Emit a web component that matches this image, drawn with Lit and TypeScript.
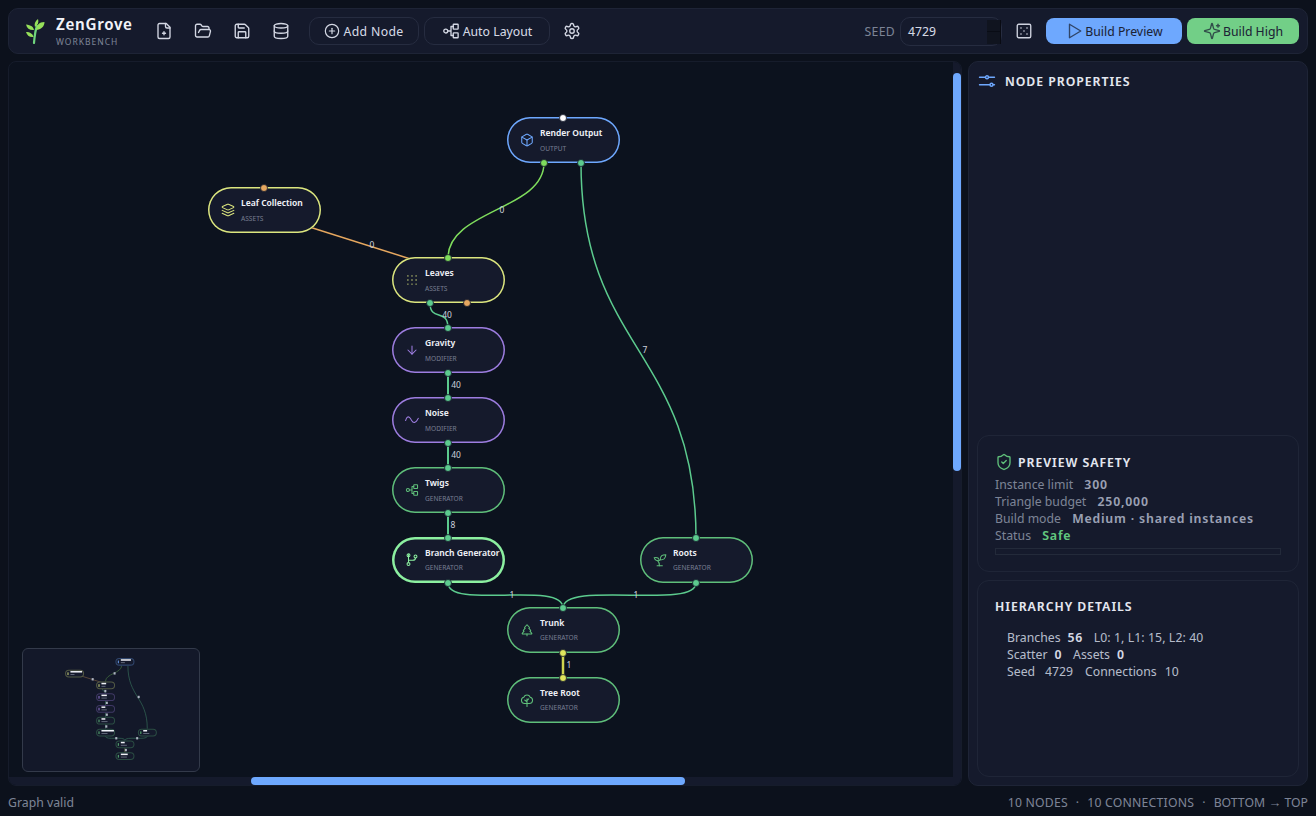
import { LitElement, html, css, svg } from "lit";
import { customElement } from "lit/decorators.js";

type Port = [number, number, string];
interface GNode { x: number; y: number; t: string; s: string; kind: string; icon: any; ports: Port[]; }

const TEAL = "#5ccb8e", LIME = "#7edb5c", ORANGE = "#e6a75f", YEL = "#dfe65c", WHITE = "#ffffff";

const ic = {
  box: svg`<path d="M21 8a2 2 0 0 0-1-1.730l-7-4a2 2 0 0 0-2 0l-7 4A2 2 0 0 0 3 8v8a2 2 0 0 0 1 1.730l7 4a2 2 0 0 0 2 0l7-4A2 2 0 0 0 21 16Z"/><path d="m3.300 7 8.700 5 8.700-5"/><path d="M12 22V12"/>`,
  layers: svg`<path d="m12.830 2.180a2 2 0 0 0-1.660 0L2.600 6.080a1 1 0 0 0 0 1.830l8.580 3.910a2 2 0 0 0 1.660 0l8.580-3.900a1 1 0 0 0 0-1.830Z"/><path d="m22 17.650-9.170 4.160a2 2 0 0 1-1.660 0L2 17.650"/><path d="m22 12.650-9.170 4.160a2 2 0 0 1-1.660 0L2 12.650"/>`,
  grip: svg`<g stroke-width="2.400" stroke-linecap="round"><path d="M5 5h.01M12 5h.01M19 5h.01M5 12h.01M12 12h.01M19 12h.01M5 19h.01M12 19h.01M19 19h.01"/></g>`,
  down: svg`<path d="M12 5v14"/><path d="m19 12-7 7-7-7"/>`,
  wave: svg`<path d="M1 13c2-7 5-8 8-4s4 9 8 7 4-5 6-7"/>`,
  net: svg`<circle cx="5" cy="12" r="2.600"/><rect x="15" y="3" width="6.500" height="6.500" rx=".8"/><rect x="15" y="14.500" width="6.500" height="6.500" rx=".8"/><path d="M7.600 12H12M12 6v12M12 6h3M12 18h3"/>`,
  branch: svg`<path d="M6 3v12"/><circle cx="6" cy="4" r="2.500"/><circle cx="18" cy="6" r="2.500"/><circle cx="6" cy="19" r="2.500"/><path d="M18 8.500c0 3-2 4-5 4H6"/>`,
  sprout: svg`<path d="M7 22h9"/><path d="M11 22c0-4-1-7-3-9"/><path d="M8.500 8.500c1.300 1 2 2.600 2.500 4.500-2.300.4-4 .4-5.500-.4C4 12 2.800 10.400 2 8c3-.5 5.200-.3 6.500.5z"/><path d="M15 4.500A8 8 0 0 0 12.500 12c2.500 0 4.800-.5 6.500-1.800 1.700-1.500 2.700-3.700 3-7.200-3 .1-5.500.5-7 1.500z"/>`,
  pine: svg`<path d="m17 14 3 3.300a1 1 0 0 1-.7 1.700H4.700a1 1 0 0 1-.7-1.700L7 14h-.3a1 1 0 0 1-.7-1.700L9 9h-.2A1 1 0 0 1 8 7.300L12 3l4 4.300a1 1 0 0 1-.8 1.700H15l3 3.300a1 1 0 0 1-.7 1.700H17Z"/><path d="M12 22v-3"/>`,
  tree: svg`<path d="M8 18a5.500 5.500 0 0 1-1.500-10.800 6 6 0 0 1 11 0A5.500 5.500 0 0 1 16 18Z"/><path d="M12 23V10M12 15l-4-3M12 13l3-3"/>`,
};

const NODES: GNode[] = [
  { x: 507, y: 118, t: "Render Output", s: "OUTPUT", kind: "output", icon: ic.box, ports: [[563, 118, WHITE], [544, 163, LIME], [581, 163, TEAL]] },
  { x: 208, y: 188, t: "Leaf Collection", s: "ASSETS", kind: "assets", icon: ic.layers, ports: [[264, 188, ORANGE]] },
  { x: 392, y: 258, t: "Leaves", s: "ASSETS", kind: "assets", icon: ic.grip, ports: [[448, 258, LIME], [430, 303, TEAL], [467, 303, ORANGE]] },
  { x: 392, y: 328, t: "Gravity", s: "MODIFIER", kind: "modifier", icon: ic.down, ports: [[448, 328, TEAL], [448, 373, TEAL]] },
  { x: 392, y: 398, t: "Noise", s: "MODIFIER", kind: "modifier", icon: ic.wave, ports: [[448, 398, TEAL], [448, 443, TEAL]] },
  { x: 392, y: 468, t: "Twigs", s: "GENERATOR", kind: "generator", icon: ic.net, ports: [[448, 468, TEAL], [448, 513, TEAL]] },
  { x: 392, y: 538, t: "Branch Generator", s: "GENERATOR", kind: "generator selected low", icon: ic.branch, ports: [[448, 538, TEAL], [448, 583, TEAL]] },
  { x: 640, y: 538, t: "Roots", s: "GENERATOR", kind: "generator low", icon: ic.sprout, ports: [[696, 538, TEAL], [696, 583, TEAL]] },
  { x: 507, y: 608, t: "Trunk", s: "GENERATOR", kind: "generator low", icon: ic.pine, ports: [[563, 608, TEAL], [563, 653, YEL]] },
  { x: 507, y: 678, t: "Tree Root", s: "GENERATOR", kind: "generator low", icon: ic.tree, ports: [[563, 678, YEL]] },
];

const EDGES = [
  { d: "M300 224 L420 262", c: ORANGE, w: 1.5, l: "0", lx: 372, ly: 245 },
  { d: "M544 163 C544 210 448 210 448 258", c: LIME, w: 1.5, l: "0", lx: 502, ly: 210 },
  { d: "M581 163 C581 350 696 350 696 538", c: TEAL, w: 1.5, l: "7", lx: 645, ly: 350 },
  { d: "M430 303 C430 322 448 308 448 328", c: TEAL, w: 1.5, l: "40", lx: 447, ly: 315 },
  { d: "M448 373 L448 398", c: TEAL, w: 2, l: "40", lx: 456, ly: 385 },
  { d: "M448 443 L448 468", c: TEAL, w: 2, l: "40", lx: 456, ly: 455 },
  { d: "M448 513 L448 538", c: TEAL, w: 2, l: "8", lx: 453, ly: 525 },
  { d: "M448 583 C448 610 563 580 563 608", c: TEAL, w: 1.5, l: "1", lx: 512, ly: 595 },
  { d: "M696 583 C696 610 563 580 563 608", c: TEAL, w: 1.5, l: "1", lx: 636, ly: 595 },
  { d: "M563 653 L563 678", c: "#cfd64f", w: 2.5, l: "1", lx: 569, ly: 665 },
];

const i = (body: any, size = 18, cls = "") => html`<svg class="ico ${cls}" width=${size} height=${size} viewBox="0 0 24 24" fill="none" stroke="currentColor" stroke-width="1.8" stroke-linecap="round" stroke-linejoin="round">${body}</svg>`;

@customElement("app-root")
export class AppRoot extends LitElement {
  static styles = css`
    :host { display: flex; flex-direction: column; height: 816px; box-sizing: border-box; padding: 8px 8px 0; background: #0c111c; font-family: "Noto Sans Display", "Noto Sans", sans-serif; color: #e6e9f2; overflow: hidden; }
    * { box-sizing: border-box; }
    .ico { display: block; flex: none; }
    .toolbar { height: 46px; flex: none; display: flex; align-items: center; background: #151a2c; border: 1px solid #1e2436; border-radius: 10px; padding: 0 8px 0 14px; }
    .brand { display: flex; align-items: center; gap: 9px; width: 121px; }
    .brand-t { display: flex; flex-direction: column; }
    .name { font-size: 16px; font-weight: 600; letter-spacing: .7px; line-height: 20px; color: #f1f3f9; }
    .wb { font-size: 9px; letter-spacing: 1px; line-height: 12px; margin-top: 2px; color: #7c8395; }
    .tbtn { width: 39px; display: flex; justify-content: center; color: #d4d8e4; }
    .tools { display: flex; margin-right: 9px; }
    .btn { height: 28px; display: flex; align-items: center; justify-content: center; gap: 3px; border: 1px solid #262c40; border-radius: 10px; font-size: 13px; color: #d4d8e4; }
    .add { width: 110px; margin-right: 5px; letter-spacing: .35px; }
    .auto { width: 126px; }
    .gear { margin-left: 13px; color: #d4d8e4; }
    .spacer { flex: 1; }
    .seed-l { font-size: 13px; letter-spacing: .3px; color: #7c8395; margin-right: 5px; }
    .seed { position: relative; width: 102px; height: 29px; border: 1px solid #262c40; border-radius: 10px; font-size: 13px; color: #d4d8e4; padding: 0 7px; display: flex; align-items: center; }
    .spin { position: absolute; right: 0; top: 2px; bottom: 1px; width: 14px; display: grid; grid-template-rows: 1fr 1fr; gap: 1px; background: #090c15; border-right: 1px solid #090b13; }
    .spin span { background: #10141f; }
    .dice { margin: 0 13px 0 13px; color: #cfd3df; }
    .build { height: 26px; display: flex; align-items: center; justify-content: center; gap: 2px; border-radius: 8px; font-size: 13px; color: #1c2436; }
    .build .ico { opacity: .75; }
    .prev { width: 136px; background: #6ea8fe; margin-right: 5px; }
    .high { width: 112px; background: #72cf87; }
    .main { flex: 1; min-height: 0; display: flex; gap: 6px; margin-top: 7px; }
    .canvas { position: relative; width: 954px; border: 1px solid #161c2b; border-radius: 8px; overflow: hidden; background: #0c121e; }
    .graph { position: absolute; left: -9px; top: -62px; width: 1316px; height: 816px; }
    .graph svg.edges, .graph svg.ports { position: absolute; inset: 0; }
    .node { position: absolute; width: 113px; height: 46px; border-radius: 23px; background: #151a2c; box-shadow: inset 0 0 0 1.5px currentColor; }
    .node.generator { color: #5fbf7a; }
    .node.selected { color: #8cf0a0; box-shadow: inset 0 0 0 2.5px currentColor; }
    .node.assets { color: #dce67e; }
    .node.modifier { color: #9d7de0; }
    .node.output { color: #6ea8fe; }
    .nico { position: absolute; left: 13px; top: 16px; }
    .nt { position: absolute; left: 33px; top: 8px; font-size: 9px; font-weight: 600; line-height: 16px; color: #eef0f6; white-space: nowrap; }
    .ns { position: absolute; left: 33px; top: 25px; font-size: 7px; line-height: 14px; color: #757c90; white-space: nowrap; }
    .low .ns { top: 24px; }
    .elabel { position: absolute; transform: translate(-50%, -50%); font-size: 9px; line-height: 10px; color: #c9cedb; }
    .vbar { position: absolute; right: 0; top: 0; bottom: 8px; width: 8px; background: #151a2c; }
    .vthumb { position: absolute; left: 0; top: 11px; width: 8px; height: 398px; border-radius: 4px; background: #6ea8fe; }
    .hbar { position: absolute; left: 0; right: 0; bottom: 0; height: 8px; background: #151a2c; }
    .hthumb { position: absolute; left: 242px; top: 0; width: 434px; height: 8px; border-radius: 4px; background: #6ea8fe; }
    .mini { position: absolute; left: 13px; top: 586px; width: 178px; height: 124px; background: #131829; border: 1px solid #333a4a; border-radius: 6px; overflow: hidden; }
    .mini-g { position: absolute; left: 6.6px; top: -11px; width: 1316px; height: 816px; transform: scale(.1685); transform-origin: 0 0; }
    .mini-g svg.edges { position: absolute; inset: 0; opacity: .38; }
    .mini-g svg.edges path { stroke-width: 5px; }
    .mnode { position: absolute; width: 113px; height: 46px; border: 6px solid color-mix(in srgb, currentColor 32%, #131829); border-radius: 23px; background: #151a2c; }
    .mnode.generator { color: #5fbf7a; }
    .mnode.assets { color: #dce67e; }
    .mnode.modifier { color: #9d7de0; }
    .mnode.output { color: #6ea8fe; }
    .mt { position: absolute; left: 26px; top: 2px; height: 9px; background: #f0f2f8; }
    .ms { position: absolute; left: 26px; top: 20px; height: 5px; background: #6f7688; }
    .mi { position: absolute; left: 8px; top: 10px; width: 7px; height: 16px; background: currentColor; opacity: .8; }
    .mlabel { position: absolute; width: 12px; height: 14px; background: #aeb4c2; }
    .panel { flex: 1; display: flex; flex-direction: column; background: #151a2c; border: 1px solid #1e2436; border-radius: 10px; padding: 0 8px 8px; }
    .phead { height: 38px; display: flex; align-items: center; gap: 9px; padding-left: 1px; color: #6ea8fe; flex: none; }
    .ptitle { font-size: 13px; font-weight: 600; letter-spacing: .95px; color: #e4e7f0; line-height: 18px; }
    .pspace { flex: 1; }
    .card { border: 1px solid #1f2537; border-radius: 12px; padding: 0 17px; }
    .safety { height: 137px; padding-top: 16px; margin-bottom: 8px; }
    .stitle { display: flex; align-items: center; gap: 5px; margin-bottom: 4px; color: #5fbf7a; height: 20px; }
    .row { font-size: 13px; line-height: 17px; color: #7c8395; white-space: nowrap; }
    .row b { font-weight: 600; letter-spacing: .8px; color: #9aa0b3; margin-left: 8px; }
    .row b.ok { color: #62c77f; }
    .bar { height: 7px; margin: 4px 0 0; border: 1px solid #232a3a; }
    .hier { height: 197px; padding-top: 15px; }
    .htitle { height: 20px; display: flex; align-items: center; }
    .hrows { margin: 13px 0 0 12px; font-size: 13px; line-height: 17px; color: #b4bac9; white-space: nowrap; }
    .hrows b { font-weight: 600; color: #d3d7e2; letter-spacing: .5px; margin: 0 11px 0 7px; }
    .hrows .lv { letter-spacing: .1px; }
    .hrows .v { margin-left: 10px; }
    .hrows .n { margin-left: 12px; }
    .hrows .c { margin-left: 8px; }
    .status { height: 30px; padding-top: 2px; flex: none; display: flex; align-items: center; justify-content: space-between; font-size: 13px; color: #7c8395; }
    .status .r { display: flex; gap: 8px; }
    .status .wide { letter-spacing: .2px; }
  `;

  private edges() {
    return html`<svg class="edges" width="1316" height="816" fill="none">
      ${EDGES.map((e) => svg`<path d=${e.d} stroke=${e.c} stroke-width=${e.w} />`)}
    </svg>`;
  }

  render() {
    return html`
      <header class="toolbar">
        <div class="brand">
          <svg class="ico" width="24" height="26" viewBox="0 0 24 26" fill="none">
            <path d="M11 25C11.500 19 12 13 14 8" stroke="#6fd47e" stroke-width="2.200" stroke-linecap="round"/>
            <path d="M13 12C13.500 7.500 16 4 21.500 4 21.500 8.500 18 11.500 13 12Z" fill="#96e05a"/>
            <path d="M12 9C11 6 12 3 15 1 16 4 15 7 12 9Z" fill="#96e05a"/>
            <path d="M11 12C10.500 9 8 7 3 6.500 4 10.500 7 12.500 11 12Z" fill="#96e05a"/>
            <path d="M10.500 19C10 16 7 14 3 14 4 17.500 6.500 19.500 10.500 19Z" fill="#96e05a"/>
          </svg>
          <div class="brand-t"><span class="name">ZenGrove</span><span class="wb">WORKBENCH</span></div>
        </div>
        <div class="tools">
          <span class="tbtn">${i(svg`<path d="M15 2H6a2 2 0 0 0-2 2v16a2 2 0 0 0 2 2h12a2 2 0 0 0 2-2V7Z"/><path d="M14 2v4a2 2 0 0 0 2 2h4"/><path d="M10 15h4"/><path d="M12 17v-4"/>`)}</span>
          <span class="tbtn">${i(svg`<path d="m6 14 1.500-2.900A2 2 0 0 1 9.240 10H20a2 2 0 0 1 1.940 2.500l-1.540 6a2 2 0 0 1-1.950 1.500H4a2 2 0 0 1-2-2V5a2 2 0 0 1 2-2h3.900a2 2 0 0 1 1.690.9l.81 1.200a2 2 0 0 0 1.670.9H18a2 2 0 0 1 2 2v2"/>`)}</span>
          <span class="tbtn">${i(svg`<path d="M15.200 3a2 2 0 0 1 1.400.6l3.800 3.800a2 2 0 0 1 .6 1.400V19a2 2 0 0 1-2 2H5a2 2 0 0 1-2-2V5a2 2 0 0 1 2-2z"/><path d="M17 21v-7a1 1 0 0 0-1-1H8a1 1 0 0 0-1 1v7"/><path d="M7 3v4a1 1 0 0 0 1 1h7"/>`)}</span>
          <span class="tbtn">${i(svg`<ellipse cx="12" cy="5" rx="9" ry="3"/><path d="M3 5V19A9 3 0 0 0 21 19V5"/><path d="M3 12A9 3 0 0 0 21 12"/>`)}</span>
        </div>
        <div class="btn add">${i(svg`<circle cx="12" cy="12" r="10"/><path d="M8 12h8"/><path d="M12 8v8"/>`, 16)}Add Node</div>
        <div class="btn auto">${i(ic.net, 18)}Auto Layout</div>
        <span class="gear">${i(svg`<path d="M12.220 2h-.44a2 2 0 0 0-2 2v.18a2 2 0 0 1-1 1.730l-.43.25a2 2 0 0 1-2 0l-.15-.08a2 2 0 0 0-2.730.73l-.22.38a2 2 0 0 0 .73 2.730l.15.1a2 2 0 0 1 1 1.720v.51a2 2 0 0 1-1 1.740l-.15.09a2 2 0 0 0-.73 2.730l.22.38a2 2 0 0 0 2.730.73l.15-.08a2 2 0 0 1 2 0l.43.25a2 2 0 0 1 1 1.730V20a2 2 0 0 0 2 2h.44a2 2 0 0 0 2-2v-.18a2 2 0 0 1 1-1.730l.43-.25a2 2 0 0 1 2 0l.15.08a2 2 0 0 0 2.730-.73l.22-.39a2 2 0 0 0-.73-2.730l-.15-.08a2 2 0 0 1-1-1.740v-.5a2 2 0 0 1 1-1.740l.15-.09a2 2 0 0 0 .73-2.730l-.22-.38a2 2 0 0 0-2.730-.73l-.15.08a2 2 0 0 1-2 0l-.43-.25a2 2 0 0 1-1-1.730V4a2 2 0 0 0-2-2z"/><circle cx="12" cy="12" r="3"/>`)}</span>
        <span class="spacer"></span>
        <span class="seed-l">SEED</span>
        <div class="seed">4729<span class="spin"><span></span><span></span></span></div>
        <span class="dice">${i(svg`<rect x="3" y="3" width="18" height="18" rx="2"/><path d="M8 8h.01M16 8h.01M12 12h.01M8 16h.01M16 16h.01" stroke-width="2.200"/>`)}</span>
        <div class="build prev">${i(svg`<path d="M6 3l15 9-15 9z"/>`, 18)}Build Preview</div>
        <div class="build high">${i(svg`<path d="M9.937 15.500A2 2 0 0 0 8.500 14.063l-6.135-1.582a.5.5 0 0 1 0-.962L8.500 9.936A2 2 0 0 0 9.937 8.500l1.582-6.135a.5.5 0 0 1 .963 0L14.063 8.500A2 2 0 0 0 15.500 9.937l6.135 1.581a.5.5 0 0 1 0 .964L15.500 14.063a2 2 0 0 0-1.437 1.437l-1.582 6.135a.5.5 0 0 1-.963 0z"/><path d="M20 3v4"/><path d="M22 5h-4"/>`, 18)}Build High</div>
      </header>
      <div class="main">
        <section class="canvas">
          <div class="graph">
            ${this.edges()}
            ${NODES.map((n) => html`
              <div class="node ${n.kind}" style="left:${n.x}px;top:${n.y - 1}px">
                <span class="nico">${i(n.icon, 14)}</span>
                <span class="nt">${n.t}</span>
                <span class="ns">${n.s}</span>
              </div>`)}
            ${EDGES.map((e) => html`<span class="elabel" style="left:${e.lx}px;top:${e.ly}px">${e.l}</span>`)}
            <svg class="ports" width="1316" height="816">
              ${NODES.flatMap((n) => n.ports).map((p) => svg`<circle cx=${p[0]} cy=${p[1]} r="3.5" fill=${p[2]} stroke="#151a2c" stroke-width=".8" />`)}
            </svg>
          </div>
          <div class="mini"><div class="mini-g">
            ${this.edges()}
            ${NODES.map((n) => html`
              <div class="mnode ${n.kind}" style="left:${n.x}px;top:${n.y}px">
                <span class="mi"></span>
                <span class="mt" style="width:${n.t.length * 4.6}px"></span>
                <span class="ms" style="width:${n.s.length * 4}px"></span>
              </div>`)}
            ${EDGES.map((e) => html`<span class="mlabel" style="left:${e.lx - 6}px;top:${e.ly - 7}px"></span>`)}
          </div></div>
          <div class="vbar"><div class="vthumb"></div></div>
          <div class="hbar"><div class="hthumb"></div></div>
        </section>
        <aside class="panel">
          <div class="phead">${i(svg`<path d="M2 7h8M14 7h8M2 17h14M20 17h2"/><circle cx="12" cy="7" r="2"/><circle cx="18" cy="17" r="2"/>`, 18)}<span class="ptitle">NODE PROPERTIES</span></div>
          <div class="pspace"></div>
          <div class="card safety">
            <div class="stitle">${i(svg`<path d="M20 13c0 5-3.500 7.500-7.660 8.950a1 1 0 0 1-.67-.01C7.500 20.500 4 18 4 13V6a1 1 0 0 1 1-1c2 0 4.500-1.200 6.240-2.720a1.170 1.170 0 0 1 1.520 0C14.510 3.810 17 5 19 5a1 1 0 0 1 1 1z"/><path d="m9 12 2 2 4-4"/>`, 18)}<span class="ptitle">PREVIEW SAFETY</span></div>
            <div class="row">Instance limit <b>300</b></div>
            <div class="row">Triangle budget <b>250,000</b></div>
            <div class="row">Build mode <b>Medium · shared instances</b></div>
            <div class="row">Status <b class="ok">Safe</b></div>
            <div class="bar"></div>
          </div>
          <div class="card hier">
            <div class="htitle"><span class="ptitle">HIERARCHY DETAILS</span></div>
            <div class="hrows">
              <div>Branches<b>56</b><span class="lv">L0: 1, L1: 15, L2: 40</span></div>
              <div>Scatter<b>0</b>Assets<b>0</b></div>
              <div>Seed<span class="v">4729</span><span class="n">Connections</span><span class="c">10</span></div>
            </div>
          </div>
        </aside>
      </div>
      <footer class="status">
        <span>Graph valid</span>
        <span class="r"><span class="wide">10 NODES</span><span>·</span><span class="wide">10 CONNECTIONS</span><span>·</span><span>BOTTOM → TOP</span></span>
      </footer>
    `;
  }
}
